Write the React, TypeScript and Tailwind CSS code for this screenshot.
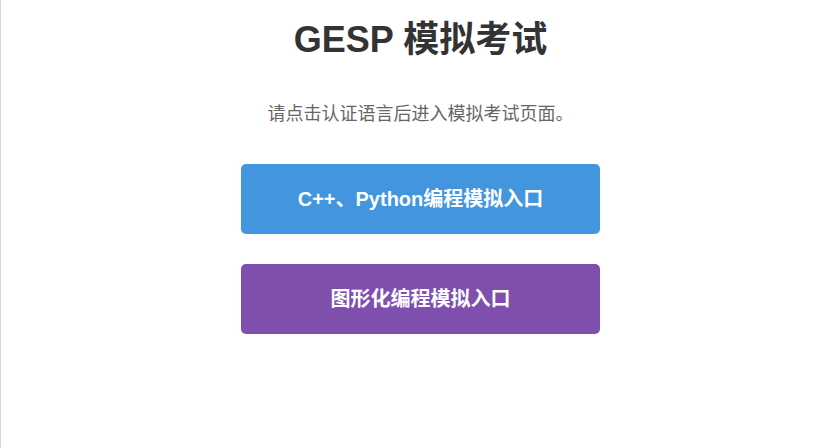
import React from "react";

const entries = [
  { label: "C++、Python编程模拟入口", className: "bg-[#4396de]" },
  { label: "图形化编程模拟入口", className: "bg-[#7f4fae]" },
];

const App: React.FC = () => {
  return (
    <div
      className="min-h-screen bg-white border-l border-[#d9d9d9] flex flex-col items-center pt-[18px]"
      style={{ fontFamily: '"Liberation Sans", "Noto Sans CJK SC", sans-serif' }}
    >
      <h1 className="text-[36px] leading-[43px] font-bold text-[#333333]">GESP 模拟考试</h1>
      <p className="mt-[40px] text-[18px] leading-[27px] text-[#666666]">
        请点击认证语言后进入模拟考试页面。
      </p>
      <div className="mt-[36px] flex flex-col gap-[30px]">
        {entries.map((item) => (
          <button
            key={item.label}
            className={`w-[359px] h-[70px] rounded-[5px] text-white text-[20px] font-bold ${item.className}`}
          >
            {item.label}
          </button>
        ))}
      </div>
    </div>
  );
};

export default App;
